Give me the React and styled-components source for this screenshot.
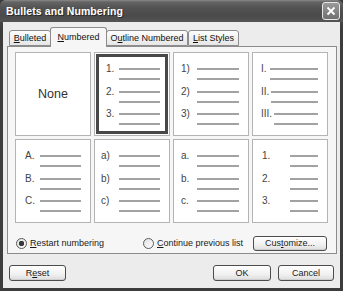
import React from 'react';
import styled, { createGlobalStyle } from 'styled-components';

const Global = createGlobalStyle`
  html, body {
    margin: 0;
    padding: 0;
    background: #3a3a3a;
  }
  u {
    text-decoration: underline;
    text-underline-offset: 1px;
  }
`;

const Window = styled.div`
  width: 343px;
  height: 291px;
  box-sizing: border-box;
  display: flex;
  flex-direction: column;
  background: linear-gradient(#5a5a5a, #3c3c3c 30px, #3c3c3c);
  border-radius: 6px 6px 0 0;
  font-family: 'Liberation Sans', Arial, sans-serif;
  color: #1a1a1a;
  overflow: hidden;
`;

const TitleBar = styled.div`
  height: 22px;
  flex: none;
  display: flex;
  align-items: center;
  justify-content: space-between;
  padding: 0 3px 0 6px;
  background: linear-gradient(#8a8a8a 0px, #646464 2px, #525252 8px, #4a4a4a 16px, #555 22px);
  h1 {
    margin: 0;
    font-size: 10.5px;
    font-weight: bold;
    color: #fff;
    text-shadow: 1px 1px 0 #2a2a2a;
    letter-spacing: 0.1px;
  }
`;

const CloseButton = styled.div`
  width: 18px;
  height: 18px;
  box-sizing: border-box;
  border: 1px solid #e8e8e8;
  border-radius: 3px;
  background: linear-gradient(#9a9a9a, #707070);
  display: flex;
  align-items: center;
  justify-content: center;
`;

const Body = styled.div`
  flex: 1;
  margin: 0 3px 3px;
  background: #ececec;
  padding: 5px 0 0 4px;
  display: flex;
  flex-direction: column;
`;

const Tabs = styled.div`
  display: flex;
  align-items: flex-end;
  margin-left: 2px;
  height: 19px;
  position: relative;
  z-index: 1;
`;

const Tab = styled.div`
  box-sizing: border-box;
  width: ${p => p.$w}px;
  height: ${p => (p.$active ? 20 : 16)}px;
  margin: ${p => (p.$active ? '0 -1px -1px' : '0')};
  padding-top: ${p => (p.$active ? 4 : 2)}px;
  text-align: center;
  font-size: 9px;
  border: 1px solid #8c8c8c;
  border-bottom: ${p => (p.$active ? 'none' : '1px solid #8c8c8c')};
  border-radius: 3px 3px 0 0;
  background: ${p => (p.$active ? '#f6f6f6' : 'linear-gradient(#fdfdfd, #e6e6e6)')};
  color: #111;
`;

const Panel = styled.div`
  width: 330px;
  height: 208px;
  box-sizing: border-box;
  border: 1px solid #8c8c8c;
  background: #f6f6f6;
  padding: 5px 8px 0 7px;
  display: flex;
  flex-direction: column;
`;

const Grid = styled.div`
  display: grid;
  grid-template-columns: repeat(4, 76px);
  grid-template-rows: 84px 84px;
  gap: 3px;
`;

const Cell = styled.div`
  box-sizing: border-box;
  border: 1px solid #b4b4b4;
  background: #fff;
  padding: 11px 9px 0 ${p => p.$pad - 1}px;
  display: flex;
  flex-direction: column;
  gap: 2.5px;
  box-shadow: ${p => (p.$selected ? 'inset 0 0 0 1px #fff, inset 0 0 0 4px #484848' : 'none')};
`;

const NoneCell = styled(Cell)`
  padding: 0;
  align-items: center;
  justify-content: center;
  font-size: 12.5px;
  color: #333;
`;

const Item = styled.div`
  display: grid;
  grid-template-columns: minmax(${p => p.$col}px, auto) 1fr;
  grid-template-rows: 10px 10px;
  align-items: center;
`;

const Label = styled.span`
  font-size: 10px;
  line-height: 10px;
  color: #444;
  padding-right: 2px;
`;

const Line = styled.div`
  grid-column: 2;
  height: 2px;
  background: #a2a2a2;
`;

const Options = styled.div`
  display: flex;
  align-items: center;
  margin-top: 12px;
  height: 16px;
  font-size: 9px;
`;

const RadioLabel = styled.label`
  display: flex;
  align-items: center;
  gap: 3px;
  width: ${p => p.$w}px;
  margin-left: ${p => p.$ml || 0}px;
  color: #1a1a1a;
`;

const RadioDot = styled.span`
  width: 11px;
  height: 11px;
  box-sizing: border-box;
  border-radius: 50%;
  border: 1px solid #5a5a5a;
  background: radial-gradient(circle, ${p => (p.$on ? '#3a3a3a 0 2.5px, transparent 3px' : 'transparent 0')}), linear-gradient(135deg, #e0e0e0, #fff);
`;

const Button = styled.div`
  box-sizing: border-box;
  width: ${p => p.$w}px;
  height: ${p => p.$h || 16}px;
  border: 1px solid #4c4c4c;
  border-radius: 3px;
  background: linear-gradient(#fff, #f0f0f0 60%, #dcdcdc);
  box-shadow: inset 0 -1px 0 #cfcfcf;
  font-size: 9px;
  display: flex;
  align-items: center;
  justify-content: center;
  color: #1a1a1a;
`;

const CustomizeButton = styled(Button)`
  margin-left: auto;
  margin-right: 1px;
`;

const Footer = styled.div`
  display: flex;
  margin-top: 11px;
  padding: 0 6px 0 2px;
  gap: 7px;
  & > :first-child {
    margin-right: auto;
  }
`;

const styles = [
  { selected: true, pad: 12, col: 13, labels: ['1.', '2.', '3.'] },
  { pad: 8, col: 16, labels: ['1)', '2)', '3)'] },
  { pad: 9, col: 9, labels: ['I.', 'II.', 'III.'] },
  { pad: 10, col: 15, labels: ['A.', 'B.', 'C.'] },
  { pad: 7, col: 18, labels: ['a)', 'b)', 'c)'] },
  { pad: 8, col: 16, labels: ['a.', 'b.', 'c.'] },
  { pad: 10, col: 28, labels: ['1.', '2.', '3.'] },
];

function ListCell({ s }) {
  return (
    <Cell $pad={s.pad} $selected={s.selected}>
      {s.labels.map(l => (
        <Item key={l} $col={s.col}>
          <Label>{l}</Label>
          <Line />
          <Line />
        </Item>
      ))}
    </Cell>
  );
}

export default function App() {
  return (
    <>
      <Global />
      <Window>
        <TitleBar>
          <h1>Bullets and Numbering</h1>
          <CloseButton>
            <svg width="10" height="10" viewBox="0 0 10 10">
              <path d="M1.5 1.5 L8.5 8.5 M8.5 1.5 L1.5 8.5" stroke="#fff" strokeWidth="1.8" />
            </svg>
          </CloseButton>
        </TitleBar>
        <Body>
          <Tabs>
            <Tab $w={42}><u>B</u>ulleted</Tab>
            <Tab $w={57} $active><u>N</u>umbered</Tab>
            <Tab $w={82}>O<u>u</u>tline Numbered</Tab>
            <Tab $w={51}><u>L</u>ist Styles</Tab>
          </Tabs>
          <Panel>
            <Grid>
              <NoneCell>None</NoneCell>
              {styles.map((s, i) => (
                <ListCell key={i} s={s} />
              ))}
            </Grid>
            <Options>
              <RadioLabel $w={127} $ml={1}>
                <RadioDot $on />
                <span><u>R</u>estart numbering</span>
              </RadioLabel>
              <RadioLabel $w={110}>
                <RadioDot />
                <span><u>C</u>ontinue previous list</span>
              </RadioLabel>
              <CustomizeButton $w={74} $h={15}>
                Cus<u>t</u>omize...
              </CustomizeButton>
            </Options>
          </Panel>
          <Footer>
            <Button $w={57}>R<u>e</u>set</Button>
            <Button $w={58}>OK</Button>
            <Button $w={56}>Cancel</Button>
          </Footer>
        </Body>
      </Window>
    </>
  );
}
